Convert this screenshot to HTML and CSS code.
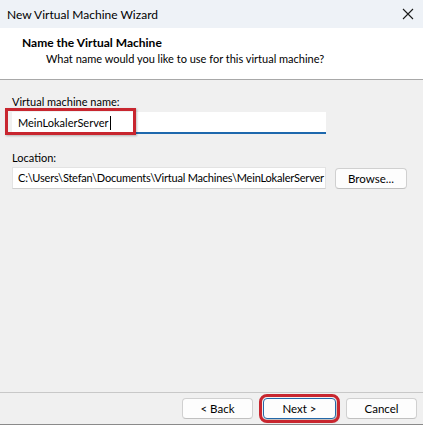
FILE: index.html
```html
<!DOCTYPE html>
<html lang="en">
<head>
  <meta charset="UTF-8">
  <title>New Virtual Machine Wizard</title>
  <link rel="stylesheet" href="styles.css">
</head>
<body>
  <div class="window">
    <div class="titlebar">
      <span class="title">New Virtual Machine Wizard</span>
      <svg class="close" width="12" height="12" viewBox="0 0 12 12">
        <path d="M1 1 L11 11 M11 1 L1 11" stroke="#1a1a1a" stroke-width="1.1" fill="none"/>
      </svg>
    </div>

    <div class="header">
      <div class="header-title">Name the Virtual Machine</div>
      <div class="header-sub">What name would you like to use for this virtual machine?</div>
    </div>

    <div class="content">
      <div class="label">Virtual machine name:</div>
      <div class="field-row">
        <div class="field name-field">
          MeinLokalerServer<span class="caret"></span>
          <div class="mark"></div>
        </div>
      </div>

      <div class="label location-label">Location:</div>
      <div class="field-row">
        <div class="field path-field">C:\Users\Stefan\Documents\Virtual Machines\MeinLokalerServer</div>
        <button class="btn browse">Browse...</button>
      </div>
    </div>

    <div class="footer">
      <button class="btn">&lt; Back</button>
      <button class="btn btn-default">Next &gt;</button>
      <button class="btn">Cancel</button>
    </div>
  </div>
</body>
</html>
```

FILE: styles.css
```css
body {
  margin: 0;
  background-color: #ffffff;
  font-family: Lato, "Noto Sans", sans-serif;
  font-size: 11px;
  color: #000;
}

.window {
  width: 423px;
  height: 424px;
  background-color: #f0f0f0;
  border-bottom: 1px solid #8a8a8a;
  display: flex;
  flex-direction: column;
  overflow: hidden;
}

.titlebar {
  height: 28px;
  background-color: #eef2f7;
  display: flex;
  justify-content: space-between;
  align-items: center;
  padding: 0 9px 0 7px;
  flex-shrink: 0;
}
.title {
  font-size: 12px;
}

.header {
  height: 52px;
  background-color: #ffffff;
  border-bottom: 1px solid #a8a8a8;
  padding: 7px 0 0 22px;
  box-sizing: border-box;
  flex-shrink: 0;
  line-height: 16px;
}
.header-title {
  font-weight: bold;
  font-size: 12px;
}
.header-sub {
  padding-left: 24px;
}

.content {
  flex: 1;
  padding: 14px 16px 0 12px;
}

.label {
  line-height: 16px;
}
.location-label {
  margin-top: 16px;
}

.field-row {
  display: flex;
  align-items: center;
  gap: 9px;
  margin-top: 1px;
}

.field {
  width: 314px;
  height: 22px;
  line-height: 22px;
  background-color: #ffffff;
  box-sizing: border-box;
  padding-left: 6px;
  white-space: nowrap;
  overflow: hidden;
  flex-shrink: 0;
}
.name-field {
  position: relative;
  margin-top: 1px;
  border-bottom: 2px solid #1d68ad;
  line-height: 21px;
  overflow: visible;
}
.caret {
  display: inline-block;
  width: 1px;
  height: 14px;
  background-color: #000;
  vertical-align: -3px;
  margin-left: 1px;
}
.mark {
  position: absolute;
  left: -7px;
  top: -4px;
  width: 131px;
  height: 27px;
  box-sizing: border-box;
  border: 3px solid #c8262f;
  box-shadow: 1px 1px 2px rgba(0, 0, 0, 0.25);
}

.path-field {
  border: 1px solid #e3e3e3;
  border-bottom-color: #cfcfcf;
  line-height: 20px;
  padding-left: 5px;
  letter-spacing: -0.2px;
}

.btn {
  font-family: inherit;
  font-size: 11.5px;
  height: 21px;
  width: 71px;
  padding: 0;
  background-color: #fdfdfd;
  border: 1px solid #d0d0d0;
  border-bottom-color: #c0c0c0;
  border-radius: 4px;
  color: #000;
}
.browse {
  width: 72px;
}

.footer {
  height: 32px;
  border-top: 1px solid #c8c8c8;
  display: flex;
  justify-content: flex-end;
  align-items: flex-start;
  gap: 10px;
  padding: 5px 6px 0 0;
  box-sizing: border-box;
  flex-shrink: 0;
}
.btn-default {
  width: 73px;
  border-color: #2468a8;
  outline: 3px solid #c8262f;
  outline-offset: 1px;
  box-shadow: 2px 3px 3px rgba(0, 0, 0, 0.2);
}
```
